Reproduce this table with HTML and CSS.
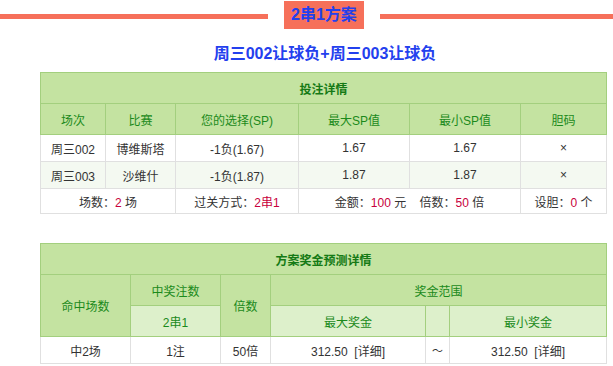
FILE: index.html
```html
<!DOCTYPE html>
<html>
<head>
<meta charset="utf-8">
<link rel="stylesheet" href="styles.css">
</head>
<body>
<div class="page">
  <div class="topbar">
    <div class="line"></div>
    <div class="badge">2串1方案</div>
    <div class="line"></div>
  </div>
  <div class="title">周三002让球负+周三003让球负</div>
  <div class="wrap">
    <table class="tbl t1">
      <colgroup>
        <col class="c65"><col class="c70"><col class="c123"><col class="c111"><col class="c111"><col>
      </colgroup>
      <tr class="cap"><th colspan="6">投注详情</th></tr>
      <tr class="hd"><td>场次</td><td>比赛</td><td>您的选择(SP)</td><td>最大SP值</td><td>最小SP值</td><td>胆码</td></tr>
      <tr class="row"><td>周三002</td><td>博维斯塔</td><td>-1负(1.67)</td><td>1.67</td><td>1.67</td><td>×</td></tr>
      <tr class="row alt"><td>周三003</td><td>沙维什</td><td>-1负(1.87)</td><td>1.87</td><td>1.87</td><td>×</td></tr>
      <tr class="foot"><td colspan="2">场数：<span class="red">2</span> 场</td><td>过关方式：<span class="red">2串1</span></td><td colspan="2">金额：<span class="red">100</span> 元&nbsp;&nbsp;&nbsp;&nbsp;倍数：<span class="red">50</span> 倍</td><td>设胆：<span class="red">0</span> 个</td></tr>
    </table>
    <table class="tbl t2">
      <colgroup>
        <col class="c90"><col class="c90"><col class="c50"><col class="c155"><col class="c24"><col>
      </colgroup>
      <tr class="cap"><th colspan="6">方案奖金预测详情</th></tr>
      <tr class="hd"><td rowspan="2">命中场数</td><td>中奖注数</td><td rowspan="2">倍数</td><td colspan="3">奖金范围</td></tr>
      <tr class="hd sub"><td>2串1</td><td>最大奖金</td><td></td><td>最小奖金</td></tr>
      <tr class="row"><td>中2场</td><td>1注</td><td>50倍</td><td>312.50&nbsp;&nbsp;[详细]</td><td class="tilde">～</td><td>312.50&nbsp;&nbsp;[详细]</td></tr>
    </table>
  </div>
</div>
</body>
</html>
```
FILE: styles.css
```css
html, body {
  margin: 0;
  padding: 0;
  background: #fff;
}
body {
  font-family: "Liberation Sans", "Noto Sans CJK SC", sans-serif;
  font-size: 12px;
  color: #333;
}
.page {
  width: 613px;
}
.topbar {
  display: grid;
  grid-template-columns: 268px auto 1fr;
  align-items: center;
  column-gap: 16px;
  height: 28px;
  padding-top: 1px;
}
.line {
  height: 5px;
  background: #f6705a;
  margin-top: 3px;
}
.badge {
  background: #f6705a;
  color: #2340ee;
  font-weight: bold;
  font-size: 16px;
  height: 28px;
  line-height: 28px;
  padding: 0 7px 0 7px;
}
.title {
  margin-top: 16px;
  padding-left: 37px;
  height: 17px;
  line-height: 17px;
  text-align: center;
  color: #2340ee;
  font-weight: bold;
  font-size: 16px;
}
.wrap {
  padding: 10px 0 0 40px;
  display: flex;
  flex-direction: column;
  gap: 29px;
}
.tbl {
  width: 567px;
  border-collapse: collapse;
  table-layout: fixed;
  text-align: center;
}
.tbl td, .tbl th {
  padding: 0;
  border: 1px solid #e0e0e0;
}
.c65 { width: 65px; }
.c70 { width: 70px; }
.c123 { width: 123px; }
.c111 { width: 111px; }
.c90 { width: 90px; }
.c50 { width: 50px; }
.c155 { width: 155px; }
.c24 { width: 24px; }
.cap th {
  background: #c4e3a1;
  color: #157a15;
  font-weight: bold;
  height: 30px;
  border: 1px solid #a3cf7e;
}
.hd td {
  background: #c4e3a1;
  color: #1b8a1b;
  height: 30px;
  border: 1px solid #a3cf7e;
}
.hd.sub td {
  background: #ddf0cb;
}
.row td {
  height: 26px;
  background: #fff;
}
.row.alt td {
  background: #f4f9f1;
}
.row td.tilde {
  font-size: 11px;
}
.foot td {
  height: 24px;
  background: #fff;
}
.red {
  color: #c8003c;
}
```
